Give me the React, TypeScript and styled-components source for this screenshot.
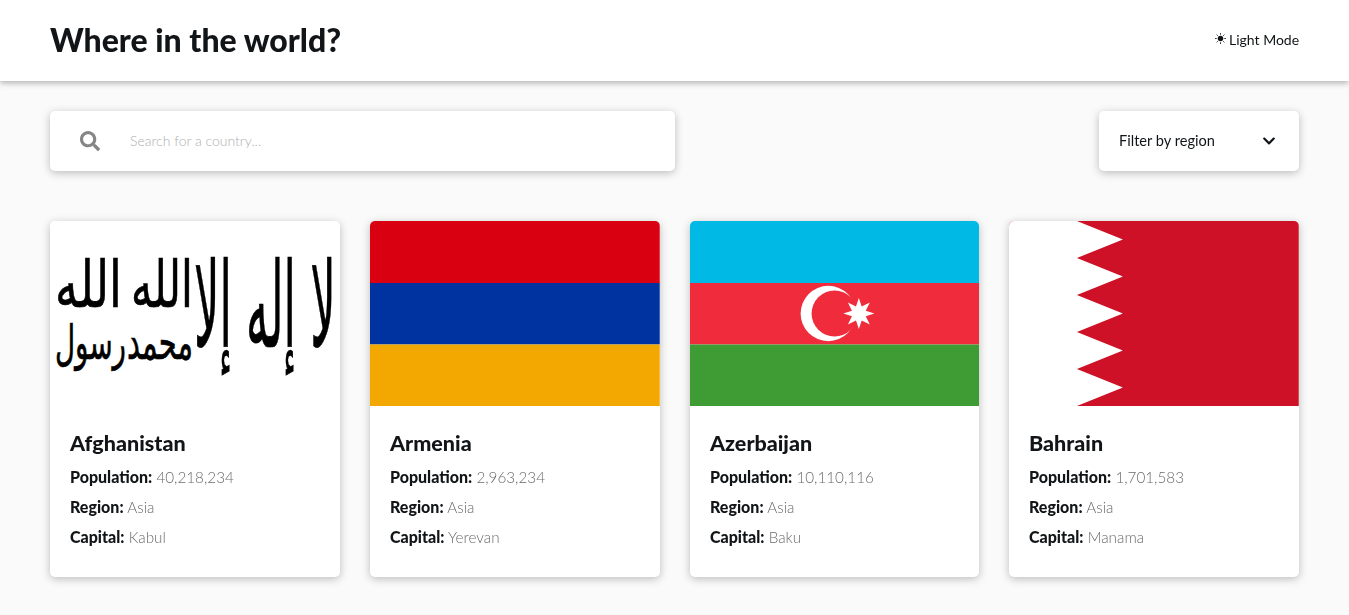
import React from "react";
import styled, { createGlobalStyle } from "styled-components";
import { FaSearch, FaChevronDown } from "react-icons/fa";

const Global = createGlobalStyle`
  html, body { margin: 0; padding: 0; background: #fafafa; }
  body { font-family: "Lato", "Noto Sans", sans-serif; color: #111517; }
  * { box-sizing: border-box; }
`;

const Header = styled.header`
  height: 81px;
  background: #fff;
  display: flex;
  align-items: center;
  justify-content: space-between;
  padding: 0 50px 2px;
  box-shadow: 0 2px 6px rgba(0, 0, 0, 0.3);
`;
const Title = styled.h1`
  margin: 0;
  font-size: 32px;
  font-weight: 900;
  color: #111517;
  will-change: transform;
`;
const ModeToggle = styled.div`
  display: flex;
  align-items: center;
  gap: 3px;
  font-size: 14px;
  color: #111517;
  will-change: transform;
`;
const SunIcon = styled.svg`
  width: 11px;
  height: 11px;
  display: block;
  margin-top: -2px;
`;
const Main = styled.main`
  padding: 30px 50px 38px;
`;
const Controls = styled.div`
  display: flex;
  justify-content: space-between;
  margin-bottom: 50px;
`;
const SearchBox = styled.div`
  width: 625px;
  height: 60px;
  background: #fff;
  border-radius: 5px;
  box-shadow: 0 2px 8px rgba(0, 0, 0, 0.25);
  display: flex;
  align-items: center;
  padding-left: 30px;
  gap: 30px;
  color: #858585;
  font-size: 20px;
`;
const SearchInput = styled.input`
  flex: 1;
  border: 0;
  outline: 0;
  background: transparent;
  font: inherit;
  font-size: 14px;
  padding: 0 0 2px;
  &::placeholder { color: #b0b0b0; opacity: 1; font-weight: 300; }
`;
const Filter = styled.div`
  width: 200px;
  height: 60px;
  background: #fff;
  border-radius: 5px;
  box-shadow: 0 2px 8px rgba(0, 0, 0, 0.25);
  display: flex;
  align-items: center;
  justify-content: space-between;
  padding: 0 23px 1px 20px;
  font-size: 14.6px;
  color: #111517;
`;
const FilterLabel = styled.span`
  will-change: transform;
`;
const Grid = styled.div`
  display: grid;
  grid-template-columns: repeat(4, 1fr);
  gap: 30px;
`;
const Card = styled.article`
  height: 356px;
  background: #fff;
  border-radius: 5px;
  overflow: hidden;
  box-shadow: 0 2px 8px rgba(0, 0, 0, 0.25);
`;
const FlagSvg = styled.svg`
  display: block;
  width: 100%;
  height: 185px;
`;
const Body = styled.div`
  padding: 25px 20px 0;
  will-change: transform;
`;
const Name = styled.h2`
  margin: 0 0 6px;
  font-size: 21.5px;
  font-weight: 900;
  line-height: 25px;
  color: #111517;
`;
const Row = styled.p`
  margin: 0;
  line-height: 30px;
  font-size: 15.25px;
  font-weight: 300;
  color: #6b6b6b;
`;
const Label = styled.strong`
  font-size: 16px;
  font-weight: 900;
  color: #111517;
`;

const star = (cx: number, cy: number, R: number, r: number) => {
  const pts: string[] = [];
  for (let i = 0; i < 16; i++) {
    const a = (Math.PI * i) / 8;
    const d = i % 2 ? r : R;
    pts.push(`${(cx + d * Math.cos(a)).toFixed(2)},${(cy + d * Math.sin(a)).toFixed(2)}`);
  }
  return pts.join(" ");
};

const ArabicText = styled.text`
  font-family: "DejaVu Sans", sans-serif;
  font-weight: 400;
  fill: #000;
  stroke: #000;
  stroke-width: 0.7px;
`;

const Afghanistan = () => (
  <FlagSvg viewBox="0 0 290 185" preserveAspectRatio="none">
    <rect width="290" height="185" fill="#fff" />
    <ArabicText x="286" y="126" fontSize="118" textLength="142" lengthAdjust="spacingAndGlyphs" direction="rtl">لا إله إلا</ArabicText>
    <ArabicText x="143" y="86" fontSize="64" textLength="62" lengthAdjust="spacingAndGlyphs" direction="rtl">الله</ArabicText>
    <ArabicText x="72" y="86" fontSize="64" textLength="67" lengthAdjust="spacingAndGlyphs" direction="rtl">الله</ArabicText>
    <ArabicText x="143" y="138" fontSize="48" textLength="66" lengthAdjust="spacingAndGlyphs" direction="rtl">محمد</ArabicText>
    <ArabicText x="76" y="138" fontSize="48" textLength="71" lengthAdjust="spacingAndGlyphs" direction="rtl">رسول</ArabicText>
  </FlagSvg>
);

const Armenia = () => (
  <FlagSvg viewBox="0 0 290 185" preserveAspectRatio="none">
    <rect width="290" height="62" fill="#d90012" />
    <rect y="62" width="290" height="61.5" fill="#0033a0" />
    <rect y="123.5" width="290" height="61.5" fill="#f2a800" />
  </FlagSvg>
);

const Azerbaijan = () => (
  <FlagSvg viewBox="0 0 290 185" preserveAspectRatio="none">
    <rect width="290" height="62" fill="#00b9e4" />
    <rect y="62" width="290" height="61.5" fill="#ef2b3c" />
    <rect y="123.5" width="290" height="61.5" fill="#3f9c35" />
    <circle cx="138.4" cy="92.5" r="27.7" fill="#fff" />
    <circle cx="144.7" cy="92.5" r="23" fill="#ef2b3c" />
    <polygon points={star(169, 92.5, 15.5, 7.5)} fill="#fff" />
  </FlagSvg>
);

const Bahrain = () => (
  <FlagSvg viewBox="0 0 290 185" preserveAspectRatio="none">
    <rect width="290" height="185" fill="#ce1126" />
    <polygon
      points="0,0 68,0 114,18.5 68,37 114,55.5 68,74 114,92.5 68,111 114,129.5 68,148 114,166.5 68,185 0,185"
      fill="#fff"
    />
  </FlagSvg>
);

const Sun = () => (
  <SunIcon viewBox="0 0 22 22">
    <circle cx="11" cy="11" r="5.5" fill="#111517" />
    <g stroke="#111517" strokeWidth="1.6">
      <path d="M11 0v3.5M11 18.5V22M0 11h3.5M18.5 11H22M3.2 3.2l2.5 2.5M16.3 16.3l2.5 2.5M3.2 18.8l2.5-2.5M16.3 5.7l2.5-2.5" />
    </g>
  </SunIcon>
);

const countries = [
  { name: "Afghanistan", population: "40,218,234", capital: "Kabul", Flag: Afghanistan },
  { name: "Armenia", population: "2,963,234", capital: "Yerevan", Flag: Armenia },
  { name: "Azerbaijan", population: "10,110,116", capital: "Baku", Flag: Azerbaijan },
  { name: "Bahrain", population: "1,701,583", capital: "Manama", Flag: Bahrain },
];

export default function App() {
  return (
    <>
      <Global />
      <Header>
        <Title>Where in the world?</Title>
        <ModeToggle>
          <Sun />
          Light Mode
        </ModeToggle>
      </Header>
      <Main>
        <Controls>
          <SearchBox>
            <FaSearch />
            <SearchInput placeholder="Search for a country..." />
          </SearchBox>
          <Filter>
            <FilterLabel>Filter by region</FilterLabel>
            <FaChevronDown size={14} color="#111517" />
          </Filter>
        </Controls>
        <Grid>
          {countries.map(({ name, population, capital, Flag }) => (
            <Card key={name}>
              <Flag />
              <Body>
                <Name>{name}</Name>
                <Row><Label>Population:</Label> {population}</Row>
                <Row><Label>Region:</Label> Asia</Row>
                <Row><Label>Capital:</Label> {capital}</Row>
              </Body>
            </Card>
          ))}
        </Grid>
      </Main>
    </>
  );
}
